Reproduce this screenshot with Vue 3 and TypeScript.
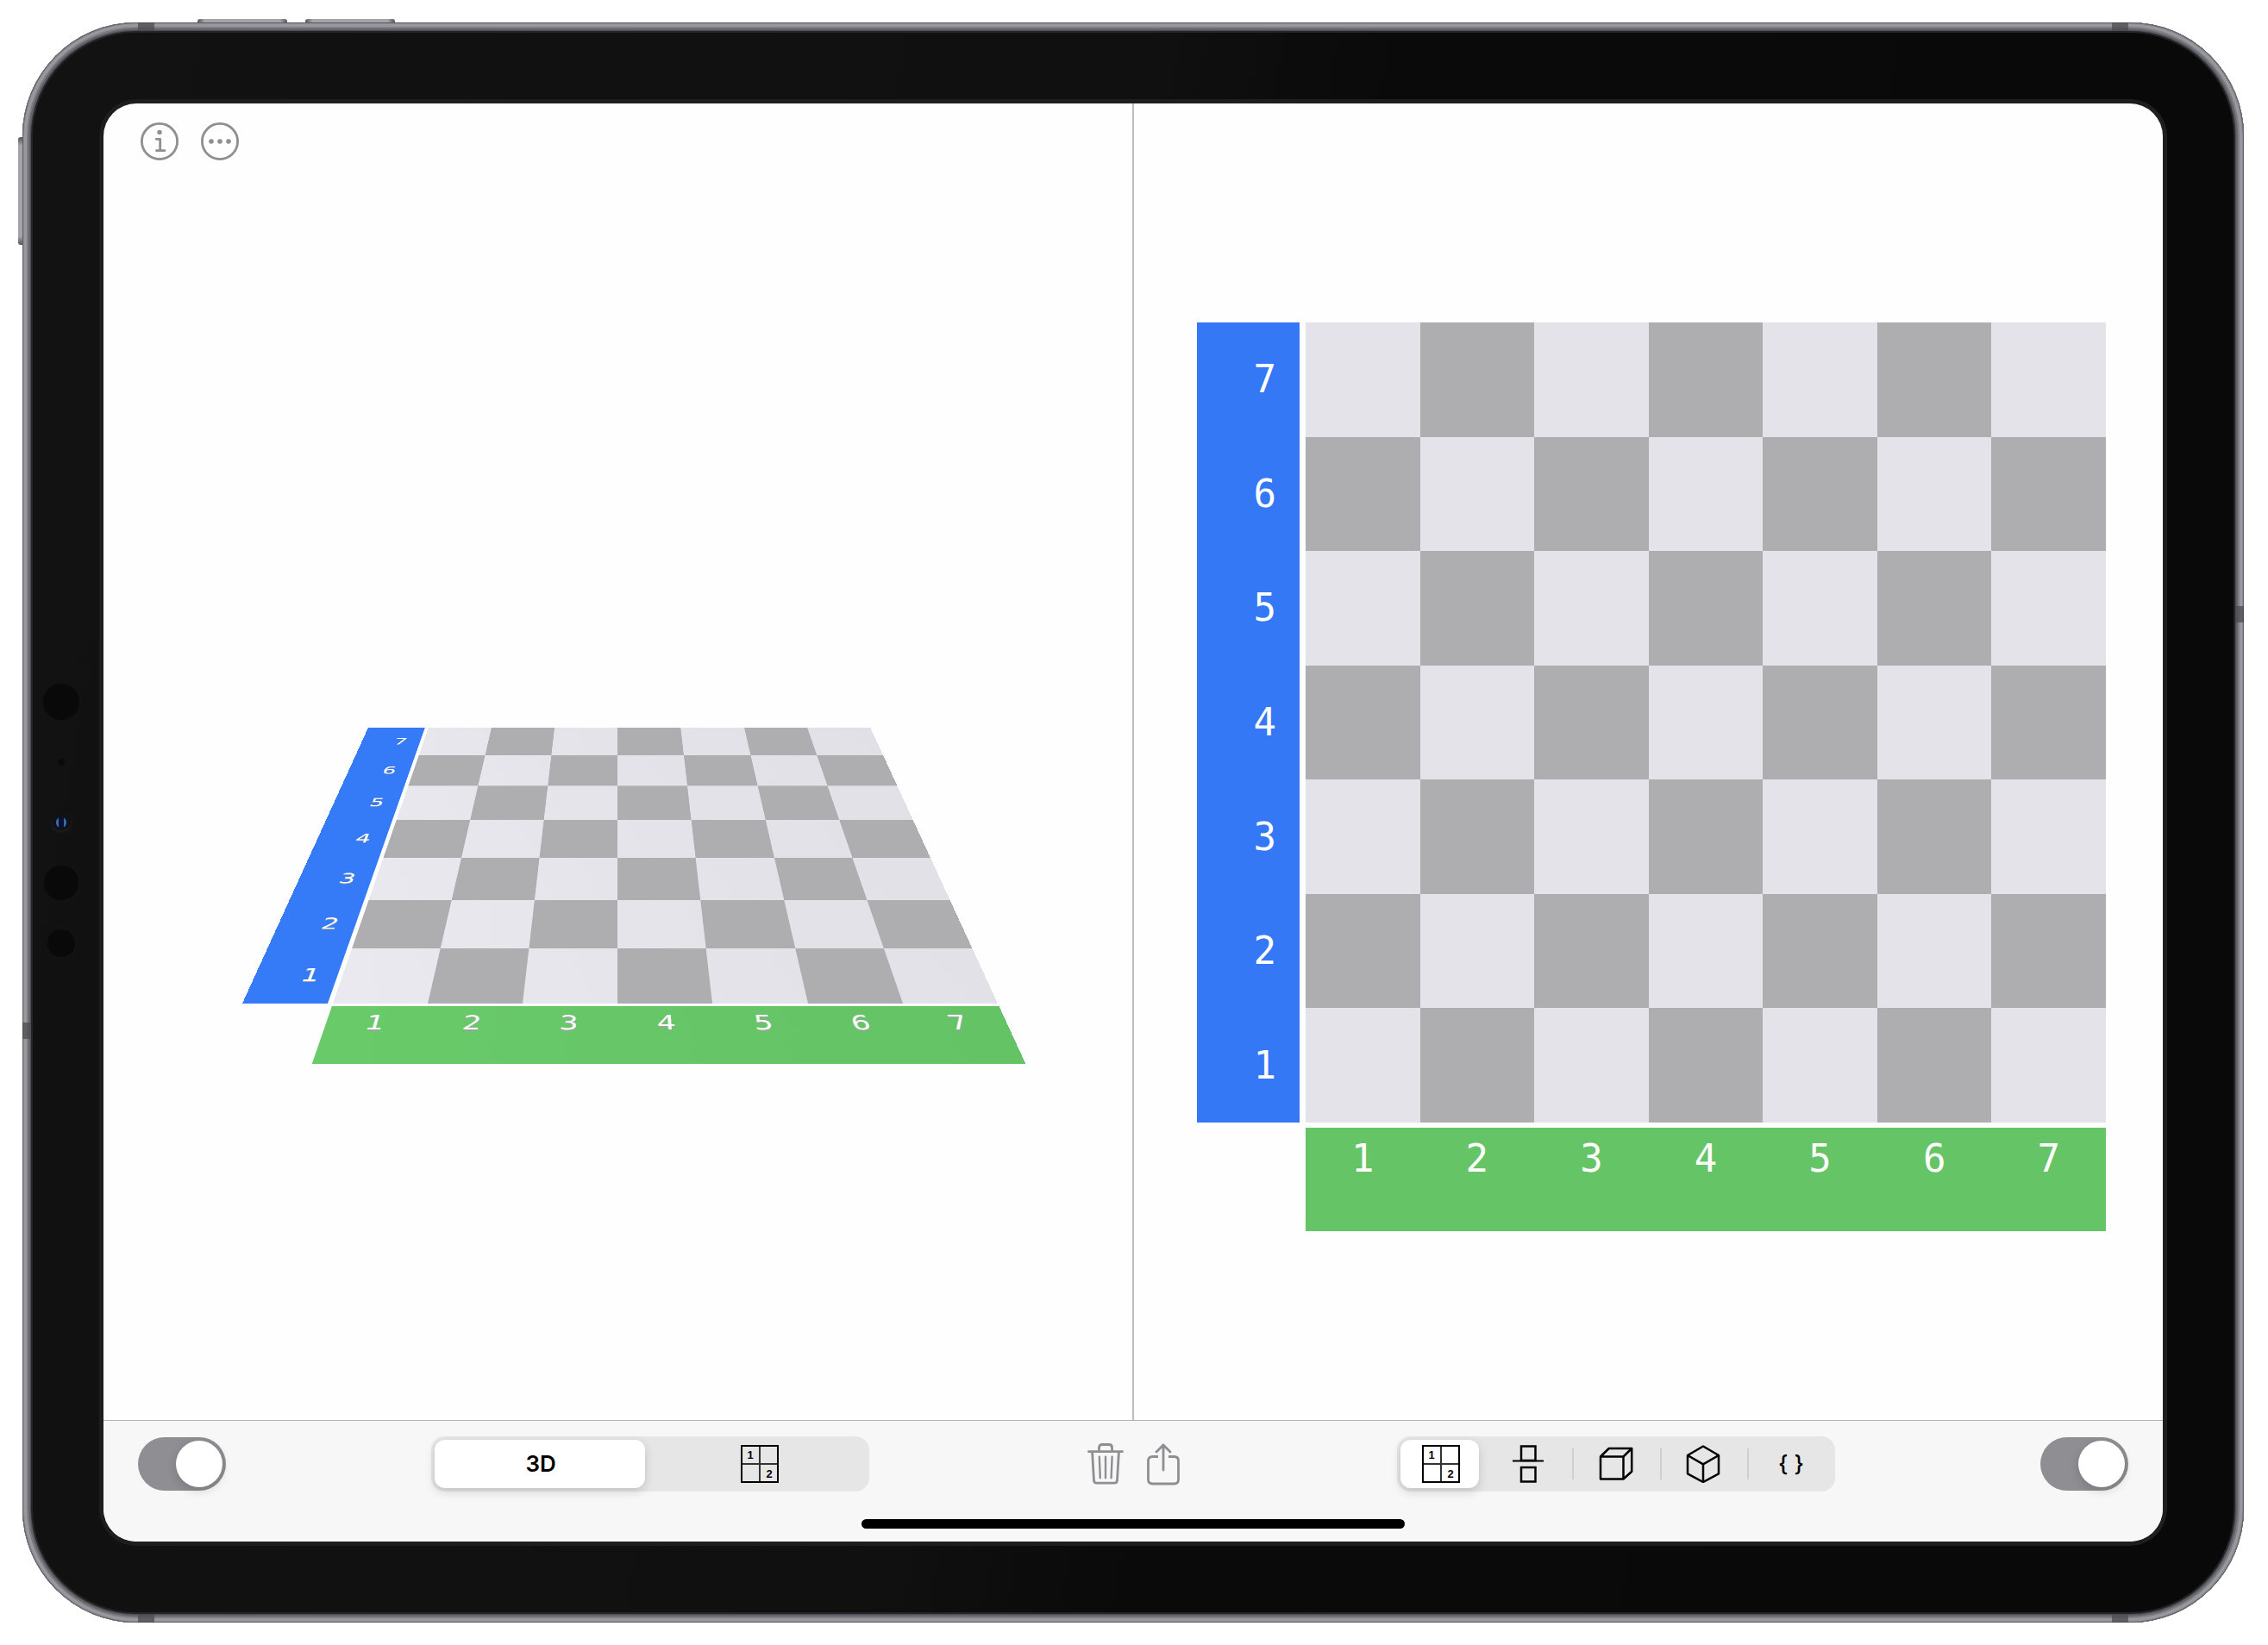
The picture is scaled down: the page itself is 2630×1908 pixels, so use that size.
<script setup lang="ts">
import { ref } from 'vue'

const SIZE = 7
const columns: number[] = Array.from({ length: SIZE }, (_, i) => i + 1)
const rows: number[] = [...columns].reverse()

const isDark = (row: number, column: number): boolean => (row + column) % 2 === 1

const boards = [
  { id: 'scene', label: '3D board', tilted: true },
  { id: 'plan', label: 'Flat board', tilted: false },
]

const leftMode = ref('3d')
const rightMode = ref('grid')
const leftOn = ref(true)
const rightOn = ref(true)

const leftModes = [
  { id: '3d', label: '3D view' },
  { id: 'grid', label: 'Numbered grid' },
]
const rightModes = [
  { id: 'grid', label: 'Numbered grid' },
  { id: 'split', label: 'Split' },
  { id: 'box', label: 'Box' },
  { id: 'cube', label: 'Cube' },
  { id: 'code', label: 'Code' },
]
</script>

<template>
  <div class="page">
    <div class="device">
      <span class="key key-top key-first"></span>
      <span class="key key-top key-second"></span>
      <span class="key key-side"></span>
      <span class="band band-h at-top at-left"></span>
      <span class="band band-h at-top at-right"></span>
      <span class="band band-h at-bottom at-left"></span>
      <span class="band band-h at-bottom at-right"></span>
      <span class="band band-v side-left"></span>
      <span class="band band-v side-right"></span>
      <svg class="sensors" viewBox="0 0 42 322" width="42" height="322" aria-hidden="true">
        <circle cx="21" cy="21" r="21" fill="#090909" />
        <circle cx="21" cy="91" r="4" fill="#0a0a0a" />
        <circle cx="21" cy="161" r="12" fill="#191919" />
        <circle cx="21" cy="159" r="11" fill="#101214" />
        <circle cx="21" cy="161" r="7" fill="#0a1230" />
        <path d="M18 155.500a6.500 6.500 0 0 0 0 11z M24 155.500a6.500 6.500 0 0 1 0 11z" fill="#3a6aa8" />
        <circle cx="21" cy="231" r="20" fill="#090909" />
        <circle cx="21" cy="301" r="16" fill="#090909" />
      </svg>

      <main class="screen">
        <div class="panes">
          <section v-for="board in boards" :key="board.id" class="pane" :class="board.id">
            <nav v-if="board.tilted" class="actions" aria-label="App">
              <button type="button" aria-label="Information">
                <svg viewBox="0 0 44 44" width="44" height="44" fill="none" stroke="currentColor" stroke-width="2.800">
                  <circle cx="22" cy="22" r="20.600" />
                  <path d="M18.200 19.300h4.500v13.300M18.500 32.700h9.500" stroke-linecap="round" stroke-linejoin="round" />
                  <circle cx="22" cy="11.400" r="2.700" fill="currentColor" stroke="none" />
                </svg>
              </button>
              <button type="button" aria-label="More">
                <svg viewBox="0 0 44 44" width="44" height="44" fill="none" stroke="currentColor" stroke-width="2.800">
                  <circle cx="22" cy="22" r="20.600" />
                  <g fill="currentColor" stroke="none">
                    <circle cx="12" cy="22" r="2.800" />
                    <circle cx="22" cy="22" r="2.800" />
                    <circle cx="32" cy="22" r="2.800" />
                  </g>
                </svg>
              </button>
            </nav>

            <div class="board" :class="{ tilted: board.tilted }" role="group" :aria-label="board.label">
              <div class="row-axis">
                <span v-for="row in rows" :key="row">{{ row }}</span>
              </div>
              <div class="cells">
                <template v-for="row in rows" :key="row">
                  <i v-for="column in columns" :key="column" :class="{ dark: isDark(row, column) }"></i>
                </template>
              </div>
              <div class="column-axis">
                <span v-for="column in columns" :key="column">{{ column }}</span>
              </div>
            </div>
          </section>
        </div>

        <footer class="toolbar">
          <div class="controls">
            <input v-model="leftOn" class="switch" type="checkbox" role="switch" aria-label="Left pane" />

            <div class="segments" role="radiogroup" aria-label="Left view">
              <label v-for="mode in leftModes" :key="mode.id" :class="{ selected: leftMode === mode.id }">
                <input v-model="leftMode" type="radio" name="left-view" :value="mode.id" :aria-label="mode.label" />
                <span v-if="mode.id === '3d'" class="caption">3D</span>
                <svg v-else class="glyph" viewBox="0 0 44 44" width="44" height="44">
                  <path d="M22 1v42M1 22h42" stroke="#333" stroke-width="2" />
                  <rect x="1" y="1" width="42" height="42" fill="none" stroke="#000" stroke-width="2" />
                  <text x="11" y="16">1</text>
                  <text x="33" y="38">2</text>
                </svg>
              </label>
            </div>

            <div class="tools">
              <button type="button" aria-label="Delete">
                <svg viewBox="0 0 42 50" width="42" height="50" fill="none" stroke="currentColor" stroke-width="2.800" stroke-linecap="round" stroke-linejoin="round">
                  <path d="M1.500 10.700h39M13.500 10V6q0-3.500 3.500-3.500h8q3.500 0 3.500 3.500v4M5.600 11.500L7.500 44q.2 3.200 3.400 3.200h20.200q3.200 0 3.400-3.200L36.400 11.500" />
                  <path d="M13.800 16.700l1 24.500M21 16.700v24.500M28.600 16.700l-1 24.500" stroke-width="2.400" />
                </svg>
              </button>
              <button type="button" aria-label="Share">
                <svg viewBox="0 0 38 50" width="38" height="50" fill="none" stroke="currentColor" stroke-width="2.800" stroke-linejoin="round">
                  <path d="M13 16.500H6.500q-5 0-5 5V43q0 5 5 5h25q5 0 5-5V21.500q0-5-5-5H25" />
                  <path d="M19 3v29M11 11l8-8 8 8" stroke-linecap="round" />
                </svg>
              </button>
            </div>

            <div class="segments divided" role="radiogroup" aria-label="Right view">
              <label v-for="mode in rightModes" :key="mode.id" :class="{ selected: rightMode === mode.id }">
                <input v-model="rightMode" type="radio" name="right-view" :value="mode.id" :aria-label="mode.label" />
                <span v-if="mode.id === 'code'" class="code">{ }</span>
                <svg v-else-if="mode.id === 'grid'" class="glyph" viewBox="0 0 44 44" width="44" height="44">
                  <path d="M22 1v42M1 22h42" stroke="#333" stroke-width="2" />
                  <rect x="1" y="1" width="42" height="42" fill="none" stroke="#000" stroke-width="2" />
                  <text x="11" y="16">1</text>
                  <text x="33" y="38">2</text>
                </svg>
                <svg v-else class="glyph" viewBox="0 0 44 44" width="44" height="44" fill="none" stroke="#000" stroke-width="2.500" stroke-linejoin="round">
                  <g v-if="mode.id === 'split'" stroke-linejoin="miter">
                    <rect x="14" y="1.500" width="16.500" height="16.500" />
                    <rect x="14" y="26" width="16.500" height="16.500" />
                    <path d="M4 18.500h36" stroke-width="1.800" />
                  </g>
                  <path v-else-if="mode.id === 'box'" d="M4 13.500h26.500v26H4zM4 13.500L13.700 4H40.200L30.500 13.500M40.200 4v26.700L30.500 39.500" />
                  <path v-else d="M22 1.500L40 12v21.300L22 43 4 33.300V12zM4 12l18 10.300L40 12M22 22.300V43" />
                </svg>
              </label>
            </div>

            <input v-model="rightOn" class="switch" type="checkbox" role="switch" aria-label="Right pane" />
          </div>
          <div class="home"></div>
        </footer>
      </main>
    </div>
  </div>
</template>

<style>
body {
  background: #fff;
}
</style>

<style scoped>
.page {
  box-sizing: border-box;
  display: flex;
  min-height: 100vh;
  padding: 26px 28px 26px 26px;
  font-family: Inter, "Liberation Sans", sans-serif;
}

button {
  display: block;
  padding: 0;
  border: 0;
  background: none;
  color: #8e8e93;
}

svg {
  display: block;
}

/* Tablet body */
.device {
  position: relative;
  box-sizing: border-box;
  display: flex;
  flex: 1;
  min-width: 0;
  padding: 94px;
  border-radius: 132px;
  background: linear-gradient(100deg, #121212 0%, #101010 45%, #0a0a0a 55%, #090909 100%);
  box-shadow:
    inset 0 0 0 1px #626267,
    inset 0 0 0 2px #8b8b90,
    inset 0 0 0 5px #98999e,
    inset 0 0 0 7px #7e7f84,
    inset 0 0 0 9px #636469,
    inset 0 0 0 10px #4e4e53,
    inset 0 0 0 12px #252528;
}

.key {
  position: absolute;
  background: linear-gradient(90deg, #55555a, #a4a4aa 8%, #a4a4aa 92%, #55555a);
}

.key-top {
  top: -4px;
  width: 104px;
  height: 4px;
  border-radius: 3px 3px 0 0;
}

.key-first {
  left: 203px;
}

.key-second {
  left: 328px;
}

.key-side {
  top: 133px;
  left: -5px;
  width: 5px;
  height: 125px;
  border-radius: 3px 0 0 3px;
  background: linear-gradient(#55555a, #a4a4aa 8%, #a4a4aa 92%, #55555a);
}

.band {
  position: absolute;
  background: #4b4b50;
  opacity: 0.75;
}

.band-h {
  width: 19px;
  height: 10px;
}

.band-v {
  width: 10px;
  height: 19px;
}

.at-top {
  top: 0;
}

.at-bottom {
  bottom: 0;
}

.at-left {
  left: 134px;
}

.at-right {
  right: 134px;
}

.side-left {
  left: 0;
  bottom: 677px;
}

.side-right {
  right: 0;
  top: 677px;
}

.sensors {
  position: absolute;
  left: 24px;
  top: calc(50% - 161px);
}

/* Screen */
.screen {
  display: flex;
  flex: 1;
  flex-direction: column;
  min-width: 0;
  overflow: hidden;
  border-radius: 38px;
  background: #fefefe;
  box-shadow: 0 0 0 5px #1e1e1e;
}

.panes {
  display: grid;
  flex: 1;
  grid-template-columns: repeat(2, minmax(0, 1fr));
  gap: 2px;
}

.pane {
  position: relative;
  display: flex;
  align-items: center;
}

.scene {
  padding: 0 156px 105px 161px;
  perspective: 1375px;
  perspective-origin: 50% 50%;
}

.plan {
  padding: 35px 66px 0 73px;
  box-shadow: -2px 0 0 #bdbdbf;
}

.actions {
  position: absolute;
  top: 22px;
  left: 43px;
  display: flex;
  gap: 26px;
}

/* Numbered board */
.board {
  display: grid;
  flex: 1;
  grid-template-columns: 119fr 7fr 928fr;
  grid-template-rows: 928fr 6fr 120fr;
  aspect-ratio: 1;
  color: #fff;
  font: 44px/72px "DejaVu Sans Mono", monospace;
}

.row-axis {
  display: grid;
  grid-template-rows: repeat(7, 1fr);
  grid-area: 1 / 1;
  justify-content: end;
  align-items: center;
  padding-right: 27px;
  background: #3478f6;
}

.column-axis {
  display: grid;
  grid-area: 3 / 3;
  grid-template-columns: repeat(7, 1fr);
  text-align: center;
  background: #65c466;
}

.cells {
  display: grid;
  grid-area: 1 / 3;
  grid-template: repeat(7, 1fr) / repeat(7, 1fr);
  background: #e4e3e9;
}

.dark {
  background: #aeaeb1;
}

.tilted {
  transform: rotateX(63.9deg);
  transform-origin: 50% 88%;
  font-size: 36px;
  line-height: 60px;
  text-shadow: 0 2px 0 #a0a0a4;
}

.tilted .row-axis {
  padding-right: 22px;
  background: #357af6;
}

.tilted .column-axis {
  background: linear-gradient(90deg, #69ca6a, #64c365);
}

.tilted .cells {
  background: linear-gradient(75deg, #eae9ef, #e4e3e9 50%, #e1e0e6);
}

/* Bottom bar */
.toolbar {
  padding: 18px 40px 15px;
  border-top: 1px solid #b2b2b4;
  background: #f7f7f7;
}

.controls {
  display: flex;
  align-items: center;
  justify-content: space-between;
}

.switch {
  appearance: none;
  width: 102px;
  height: 62px;
  margin: 0;
  padding: 4px;
  border-radius: 31px;
  background: #d8d8dc;
}

.switch::before {
  content: "";
  display: block;
  width: 54px;
  height: 54px;
  border-radius: 50%;
  background: #fff;
  box-shadow: 0 4px 12px rgb(0 0 0 / 15%);
}

.switch:checked {
  background: #8e8e93;
}

.switch:checked::before {
  margin-left: auto;
}

.segments {
  display: flex;
  width: 508px;
  height: 64px;
  border-radius: 16px;
  background: #e6e6e7;
}

.segments label {
  position: relative;
  display: flex;
  flex: 1;
  align-items: center;
  justify-content: center;
}

.segments input {
  position: absolute;
  opacity: 0;
}

.selected::before {
  content: "";
  position: absolute;
  inset: 4px 6px 4px 4px;
  border-radius: 12px;
  background: #fff;
  box-shadow: 0 4px 12px rgb(0 0 0 / 16%);
}

.divided label + label + label::after {
  content: "";
  position: absolute;
  top: 14px;
  left: 0;
  width: 2px;
  height: 36px;
  background: #cfcfd1;
}

.caption,
.code,
.glyph {
  position: relative;
  color: #000;
}

.caption {
  font-size: 26px;
  font-weight: 600;
  line-height: 32px;
}

.code {
  font-size: 26px;
  font-weight: 500;
  line-height: 32px;
}

.glyph text {
  font: bold 13px "Liberation Sans", sans-serif;
  text-anchor: middle;
}

.tools {
  display: flex;
  gap: 27px;
  padding: 0 14px;
}

.home {
  width: 630px;
  height: 11px;
  margin: 32px auto 0;
  border-radius: 6px;
  background: #000;
}
</style>
